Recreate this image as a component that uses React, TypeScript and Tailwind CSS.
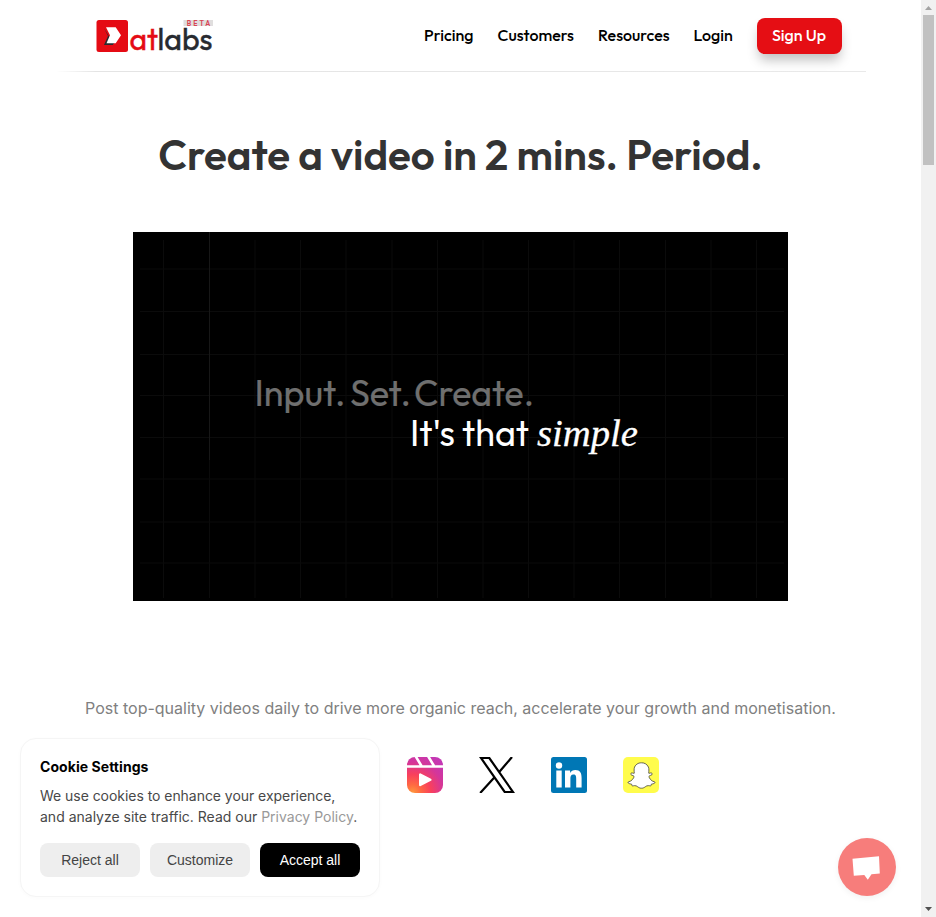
import React from "react";
import { FaSnapchatGhost } from "react-icons/fa";

const display = "font-['Outfit','Lato',sans-serif]";

function Logo() {
  return (
    <svg className="overflow-visible" width="120" height="36" viewBox="0 0 120 36" role="img">
      <rect x="0.5" y="2" width="31.5" height="32" rx="2.5" fill="#e50b14" />
      <path d="M8 10 12 18 8 27h8.800l2-3-6-6z" fill="#272a30" />
      <path d="M10 9.200h9.700l5.300 8-5.300 8h-9.200l3.500-8z" fill="#fff" />
      <rect x="87.500" y="2" width="29.500" height="6" fill="#e0dede" />
      <text x="90.800" y="7.500" fontSize="7" fontWeight="600" fill="#d94452" textLength="23.500" fontFamily="Outfit, sans-serif">BETA</text>
      <text x="33.500" y="31.800" fontSize="30" fill="#e50b14" stroke="#e50b14" strokeWidth="0.400" textLength="28.500" lengthAdjust="spacingAndGlyphs" fontFamily="Outfit, Lato, sans-serif">at</text>
      <text x="61.500" y="31.800" fontSize="30" fill="#272a30" stroke="#272a30" strokeWidth="0.400" textLength="55" lengthAdjust="spacingAndGlyphs" fontFamily="Outfit, Lato, sans-serif">labs</text>
    </svg>
  );
}

function Header() {
  return (
    <header className="mx-auto flex h-[72px] w-[810px] flex-col">
      <div className="flex h-[71px] items-center justify-between pr-[24px] pl-[40px]">
        <Logo />
        <nav className={"flex items-center gap-6 text-[16px] font-medium text-black " + display}>
          <a className="w-[49.500px] pb-0.5 whitespace-nowrap">Pricing</a>
          <a className="w-[76.500px] pb-0.5 whitespace-nowrap">Customers</a>
          <a className="w-[71.500px] pb-0.5 whitespace-nowrap">Resources</a>
          <a className="w-[39px] pb-0.5 whitespace-nowrap">Login</a>
          <button className="h-9 w-[85px] rounded-lg bg-[#e50e14] pb-0.5 whitespace-nowrap text-white shadow-[0_8px_12px_-2px_rgba(0,0,0,0.25)]">Sign Up</button>
        </nav>
      </div>
      <div className="h-px bg-gradient-to-r from-white via-[#e4e4e4] via-5% to-[#e9e9e9]" />
    </header>
  );
}

const columns = [163.5, 209.5, 255, 300.5, 346, 392, 437.5, 483, 528.5, 574, 619.5, 665.5, 711, 756.5];
const rows = [269, 311.5, 354.5, 395.5, 437.5, 479, 522, 563];

function Video() {
  return (
    <svg className="block" width="655" height="369" viewBox="133 232 655 369">
      <rect x="133" y="232" width="655" height="369" fill="#000" />
      <g stroke="#0b0b0b">
        {columns.map((x) => (
          <path key={x} d={`M${x} 240V598`} />
        ))}
        {rows.map((y) => (
          <path key={y} d={`M140 ${y}H784`} />
        ))}
      </g>
      <path d="M209.5 232V460" stroke="#171717" />
      <g fontFamily="Outfit, Lato, sans-serif" fontSize="36">
        <g fill="#6f6f6f" stroke="#6f6f6f" strokeWidth="0.200">
          <text x="254.500" y="406" textLength="91" lengthAdjust="spacingAndGlyphs">Input.</text>
          <text x="350" y="406" textLength="61" lengthAdjust="spacingAndGlyphs">Set.</text>
          <text x="414" y="406" textLength="120" lengthAdjust="spacingAndGlyphs">Create.</text>
        </g>
        <text x="410" y="445.500" fill="#fff" textLength="45" lengthAdjust="spacingAndGlyphs">It's</text>
        <text x="462" y="445.500" fill="#fff" textLength="67" lengthAdjust="spacingAndGlyphs">that</text>
      </g>
      <text x="537" y="445.500" fill="#fff" stroke="#fff" strokeWidth="0.300" fontFamily="Liberation Serif, serif" fontStyle="italic" fontSize="38" textLength="101" lengthAdjust="spacingAndGlyphs">simple</text>
    </svg>
  );
}

function Reels() {
  return (
    <svg width="36" height="36" viewBox="0 0 36 36">
      <defs>
        <radialGradient id="reels" cx="0.150" cy="1" r="1.150">
          <stop offset="0" stopColor="#ff9a3c" />
          <stop offset="0.200" stopColor="#ff6a42" />
          <stop offset="0.450" stopColor="#f9405c" />
          <stop offset="0.750" stopColor="#d4369a" />
          <stop offset="1" stopColor="#c437b4" />
        </radialGradient>
      </defs>
      <rect width="36" height="36" rx="8" fill="url(#reels)" />
      <path d="M0 9.500h36M8.500-1l6 10M21-1l6 10" stroke="#fff" strokeWidth="2.600" />
      <path d="M13.200 17.500v10.500l10.200-5.250z" fill="#fff" stroke="#fff" strokeWidth="2.400" strokeLinejoin="round" />
    </svg>
  );
}

function XMark() {
  return (
    <svg width="36" height="36" viewBox="0 0 36 36">
      <path d="M2 1h8.300l23.700 34h-8.300zM33 0 19.800 15.500M15.300 20.500 1.200 36" fill="none" stroke="#000" strokeWidth="2.200" />
    </svg>
  );
}

function LinkedIn() {
  return (
    <svg width="36" height="36" viewBox="0 0 36 36">
      <rect width="36" height="36" rx="2.500" fill="#0077b5" />
      <circle cx="8" cy="8.500" r="3.200" fill="#fff" />
      <path d="M5.300 13.500h5.400v17H5.300zM14 13.500h5.100v2.400c1-1.700 2.800-2.800 5.200-2.800 5 0 6.300 3.200 6.300 7.900v9.500h-5.400V22c0-2.300-.2-4.400-2.800-4.400-2.500 0-3 2-3 4.200v8.700H14z" fill="#fff" />
    </svg>
  );
}

function Snapchat() {
  return (
    <div className="flex size-9 items-center justify-center rounded-[5px] bg-[#fffc4c]">
      <FaSnapchatGhost size={27} color="#fff" stroke="#222" strokeWidth={13} overflow="visible" />
    </div>
  );
}

function CookieCard() {
  return (
    <aside className="absolute top-[738px] left-5 h-[159px] w-[360px] rounded-2xl border border-[#f5f5f5] bg-white px-[19px] pt-[18px] font-['Inter',sans-serif] shadow-[0_1px_4px_rgba(0,0,0,0.02)]">
      <h2 className="text-[14px] leading-5 font-bold tracking-[0.06px] text-black">Cookie Settings</h2>
      <p className="mt-2 text-[14px] leading-[21px] whitespace-nowrap text-[#484848]">
        <span className="tracking-[-0.045px]">We use cookies to enhance your experience,</span>
        <br />
        and analyze site traffic. Read our <a className="text-[#999]">Privacy Policy</a>.
      </p>
      <div className="mt-4 flex gap-2.5 font-['Liberation_Sans',sans-serif] text-[14px] text-[#444]">
        <button className="h-[34px] w-[100px] rounded-lg bg-[#eee]">Reject all</button>
        <button className="h-[34px] w-[100px] rounded-lg bg-[#eee]">Customize</button>
        <button className="h-[34px] w-[100px] rounded-lg bg-black text-white">Accept all</button>
      </div>
    </aside>
  );
}

function Scrollbar() {
  return (
    <div className="flex h-full w-[15px] flex-col items-center bg-[#f1f1f1]">
      <svg width="15" height="15" viewBox="0 0 15 15"><path d="M4 10h7L7.500 6z" fill="#a3a3a3" /></svg>
      <div className="h-[150px] w-[11px] bg-[#c1c1c1]" />
      <svg className="mt-auto" width="15" height="15" viewBox="0 0 15 15"><path d="M4 5h7L7.500 9z" fill="#505050" /></svg>
    </div>
  );
}

export default function App() {
  return (
    <div className="relative flex h-[917px] w-[936px] overflow-hidden bg-white">
      <div className="w-[921px]">
        <Header />
        <main className="flex flex-col items-center">
          <h1 className={"flex h-[160px] items-center pt-1.5 text-[42px] leading-none font-semibold whitespace-nowrap text-[#333] " + display}>
            Create a video in 2 mins. Period.
          </h1>
          <Video />
          <p className="mt-[95px] font-['Inter',sans-serif] text-[16px] leading-6 whitespace-nowrap text-[#808080]">
            Post top-quality videos daily to drive more organic reach, accelerate your growth and monetisation.
          </p>
          <div className="mt-[37px] flex gap-9 pl-[145px]">
            <Reels />
            <XMark />
            <LinkedIn />
            <Snapchat />
          </div>
        </main>
      </div>
      <Scrollbar />
      <CookieCard />
      <button className="absolute top-[838px] left-[838px] size-[58px] rounded-full bg-[#f77d7b] shadow-[0_2px_6px_rgba(0,0,0,0.06)]">
        <svg width="58" height="58" viewBox="0 0 58 58"><path d="M14.500 20.800 41 18.300l.8 17.200-8.300.8-3.700 5.400-3.500-4.700-10.500.8z" fill="#fff" /></svg>
      </button>
    </div>
  );
}
